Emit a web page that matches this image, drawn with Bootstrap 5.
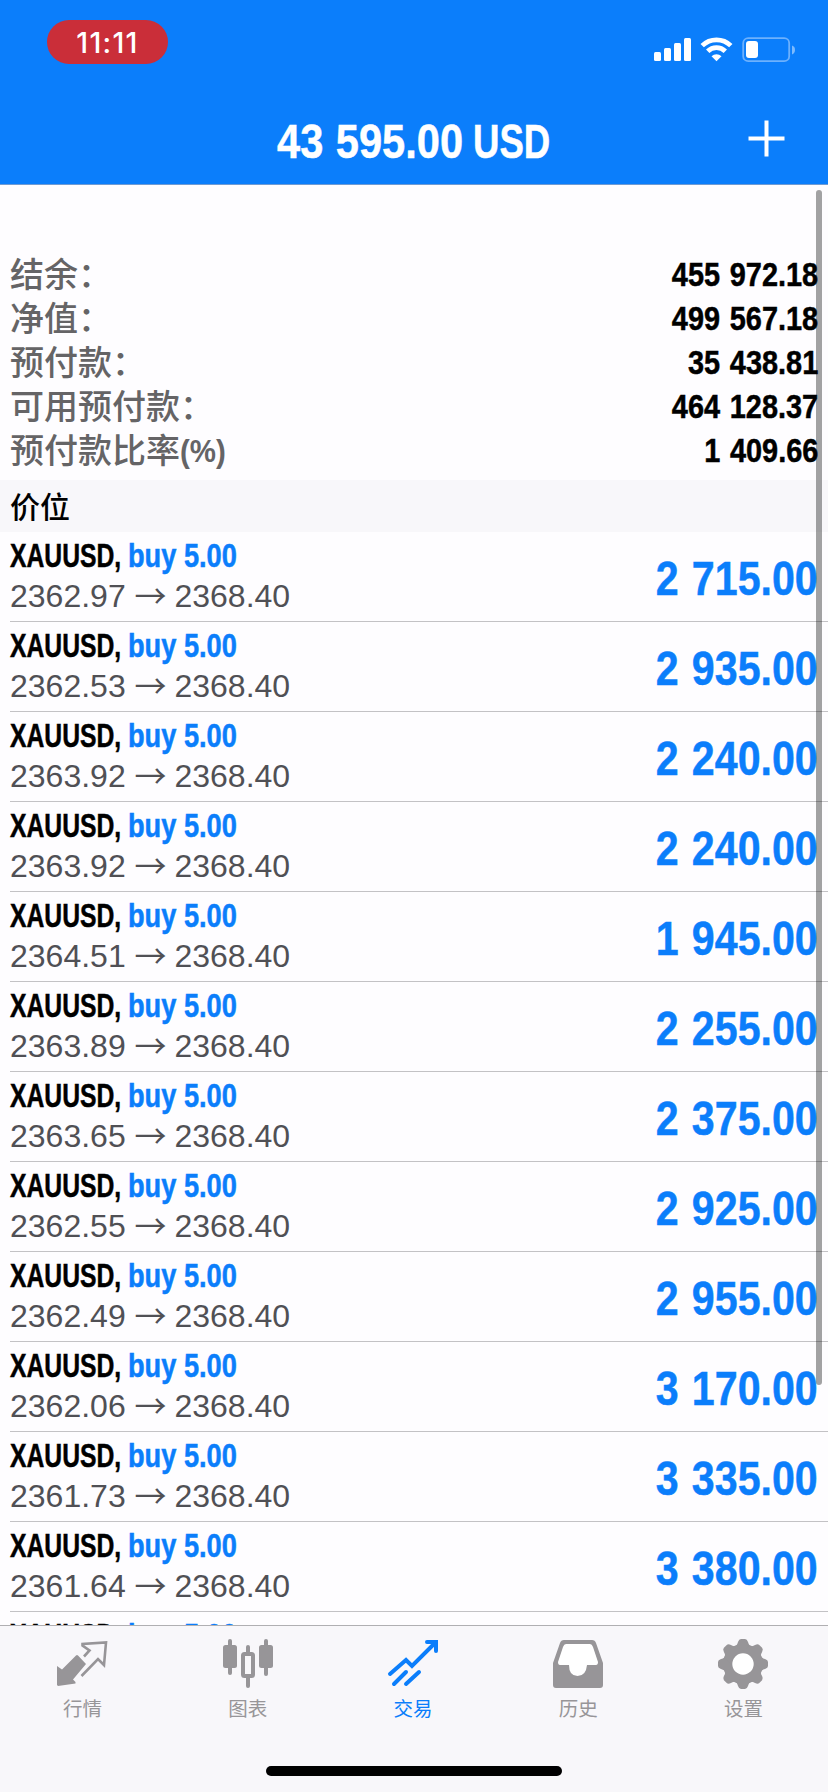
<!DOCTYPE html>
<html lang="zh-CN">
<head>
<meta charset="utf-8">
<meta name="viewport" content="width=device-width, initial-scale=1">
<title>交易</title>
<link href="https://cdn.jsdelivr.net/npm/bootstrap@5.3.0/dist/css/bootstrap.min.css" rel="stylesheet">
<style>
:root { --accent: #0b7efb; }
html, body { height: 100%; overflow: hidden; }
body { background: #fefdff; color: #000; font-family: "Liberation Sans", "Noto Sans CJK SC", sans-serif; }
.app { height: 1792px; width: 828px; }
.topbar { height: 185px; background: var(--accent); border-bottom: 1px solid #6f9bd3; color: #fff; }
.status { height: 86px; padding: 20px 32px 0 47px; }
.clock { width: 121px; height: 44px; border-radius: 22px; background: #ca2e39; font: 500 28.5px/46px Inter, sans-serif; letter-spacing: 1.3px; }
.signals { margin-top: 17px; }
.titlebar { height: 98px; }
/* condensed bold lettering */
.cond { display: inline-block; white-space: nowrap; font-weight: 700; transform: scaleX(.85); transform-origin: left; -webkit-text-stroke: .5px currentColor; }
.cond.end { transform-origin: right; }
.titlebar h1 { font-size: 49px; line-height: 56px; width: 274px; margin: 27px 0 0; }
.titlebar .amount { width: 195.5px; word-spacing: 1px; transform: scaleX(.85); }
.titlebar .ccy { width: 78.5px; transform: scaleX(.747); }
.plus { right: 43px; top: 34px; }
.summary { height: 295px; padding: 67px 10px 0; }
.summary .line { height: 44px; }
.summary dt { font: 500 34px/44px "Noto Sans CJK SC", sans-serif; color: #656466; margin-top: -1px; }
.summary dd { font-size: 34px; line-height: 44px; word-spacing: 2px; }
.pct { font: 700 32px/40px "Liberation Sans", sans-serif; transform: scaleX(.92); transform-origin: left; vertical-align: 1px; }
.section { height: 52px; padding-left: 10px; background: #f8f7fa; font: 500 30px/50px "Noto Sans CJK SC", sans-serif; }
.deals { height: 1093px; }
.deal { height: 90px; margin-left: 10px; padding-right: 10px; border-bottom: 1px solid #c3c2c5; }
.sym { font-size: 32.5px; line-height: 40px; padding-top: 4px; }
.sym .code { width: 118px; transform: scaleX(.76); }
.sym .side { color: var(--accent); transform: scaleX(.837); }
.quote { font-size: 32px; line-height: 40px; color: #505055; }
.arw { font-family: "Noto Sans CJK SC", sans-serif; line-height: 1; vertical-align: -1px; margin-right: -1px; }
.profit { font-size: 49px; line-height: 60px; color: var(--accent); word-spacing: 2px; padding-top: 2px; }
.profit.cond { transform: scaleX(.84); }
.scroll-thumb { left: 816px; top: 190px; width: 6px; height: 1195px; border-radius: 3px; background: rgba(0,0,0,.36); }
.tabs { height: 167px; background: #f8f7fa; border-top: 1px solid #b0afb2; padding-right: 2px; }
.tab { color: #979598; font: 400 19.5px/26px "Noto Sans CJK SC", sans-serif; padding-top: 12px; text-decoration: none; }
.tab span { margin-top: 5px; }
.tab.active { color: var(--accent); }
.home { left: 266px; bottom: 16px; width: 296px; height: 10px; border-radius: 5px; background: #000; }
</style>
</head>
<body>
<div class="app d-flex flex-column position-relative overflow-hidden">
  <header class="topbar flex-shrink-0">
    <div class="status d-flex justify-content-between">
      <div class="clock text-center">11:11</div>
      <svg class="signals" width="142" height="26" viewBox="0 0 142 26" fill="#fff">
        <rect x="0" y="15" width="7" height="9" rx="1.5"/><rect x="10" y="11" width="7" height="13" rx="1.5"/><rect x="20" y="6" width="7" height="18" rx="1.5"/><rect x="30" y="1" width="7" height="23" rx="1.5"/>
        <g fill="none" stroke="#fff" stroke-width="4.8"><path d="M48.2 8.600a20.500 20.500 0 0 1 28.600 0"/><path d="M53.700 14.200a12.600 12.600 0 0 1 17.600 0"/></g>
        <path d="M57.500 19.200a7.400 7.400 0 0 1 10 0l-5 5z"/>
        <rect x="89.200" y="1.200" width="46" height="23" rx="5" fill="none" stroke="#6db1fd" stroke-width="1.800"/>
        <rect x="92" y="4" width="12" height="17" rx="3"/><path d="M138 8.600q3 1 3 4.400t-3 4.400z" fill="#7dbafd"/>
      </svg>
    </div>
    <div class="titlebar position-relative d-flex justify-content-center">
      <h1 class="d-flex"><span class="cond amount">43 595.00</span><span class="cond ccy">USD</span></h1>
      <svg class="plus position-absolute" width="37" height="37" viewBox="0 0 37 37" stroke="#fff" stroke-width="4"><path d="M18.500.5v36M.5 18.500h36"/></svg>
    </div>
  </header>

  <dl class="summary flex-shrink-0 mb-0">
    <div class="line d-flex justify-content-between"><dt>结余：</dt><dd class="cond end mb-0">455 972.18</dd></div>
    <div class="line d-flex justify-content-between"><dt>净值：</dt><dd class="cond end mb-0">499 567.18</dd></div>
    <div class="line d-flex justify-content-between"><dt>预付款：</dt><dd class="cond end mb-0">35 438.81</dd></div>
    <div class="line d-flex justify-content-between"><dt>可用预付款：</dt><dd class="cond end mb-0">464 128.37</dd></div>
    <div class="line d-flex justify-content-between"><dt>预付款比率<span class="pct d-inline-block">(%)</span></dt><dd class="cond end mb-0">1 409.66</dd></div>
  </dl>
  <div class="section flex-shrink-0">价位</div>
  <main class="deals flex-shrink-0 overflow-hidden" id="deals"></main>

  <nav class="tabs flex-shrink-0 d-flex">
    <a class="tab flex-fill w-100 d-flex flex-column align-items-center"><svg width="52" height="52" viewBox="1 0 52 52"><path d="M1 28l5 3.500L20 17.500q1-1 2 0l8 8.500-13 15.500 2.500 2.500v1.500L2 48l-1-1z" fill="currentColor"/><path d="M25.500 38L42 21l6 6L50 4.500 26.500 6v1.500l7 5-5.500 6" fill="none" stroke="currentColor" stroke-width="2.600"/></svg><span>行情</span></a>
    <a class="tab flex-fill w-100 d-flex flex-column align-items-center"><svg width="52" height="52" viewBox="0 0 52 52"><g fill="currentColor"><rect x="1" y="7" width="14" height="23" rx="2.500"/><rect x="6" y="1" width="4" height="36" rx="2"/><rect x="37" y="7" width="14" height="23" rx="2.500"/><rect x="42" y="1" width="4" height="37" rx="2"/><rect x="24" y="7" width="4" height="9" rx="2"/><rect x="24" y="38" width="4" height="12" rx="2"/></g><rect x="21" y="16" width="10" height="22" rx="1.500" fill="none" stroke="currentColor" stroke-width="4"/></svg><span>图表</span></a>
    <a class="tab active flex-fill w-100 d-flex flex-column align-items-center"><svg width="52" height="52" viewBox="0 0 52 52" fill="none" stroke="currentColor" stroke-width="4" stroke-linecap="round"><path d="M3 36L19 22l6 6L48 5M7 46l12-12M19 46l13-12"/><path d="M40 4h9v9" stroke-linejoin="miter"/></svg><span>交易</span></a>
    <a class="tab flex-fill w-100 d-flex flex-column align-items-center"><svg width="52" height="52" viewBox="0 0 52 52"><path fill="currentColor" d="M12 2h28q3 0 4 3l7 20v22q0 3-3 3H4q-3 0-3-3V25L8 5q1-3 4-3z"/><path fill="#fff" d="M14 6q-2 0-3 3L6 24q0 3 2 3h9q0 11 8.500 11T35 27h9q2 0 2-3L41 9q-1-3-3-3z"/></svg><span>历史</span></a>
    <a class="tab flex-fill w-100 d-flex flex-column align-items-center"><svg width="52" height="52" viewBox="-26 -26 52 52"><g fill="currentColor"><circle r="20"/><g id="teeth"><path id="t" d="M-9-17q3-1 4-5 1-3 3-3h4q2 0 3 3 1 4 4 5V0H-9z"/><use href="#t" transform="rotate(45)"/><use href="#t" transform="rotate(90)"/><use href="#t" transform="rotate(135)"/></g><use href="#teeth" transform="rotate(180)"/></g><circle r="10.700" fill="#fff"/></svg><span>设置</span></a>
  </nav>
  <div class="scroll-thumb position-absolute"></div>
  <div class="home position-absolute"></div>
</div>
<script>
const deals = [["2362.97","2 715.00"],["2362.53","2 935.00"],["2363.92","2 240.00"],["2363.92","2 240.00"],["2364.51","1 945.00"],["2363.89","2 255.00"],["2363.65","2 375.00"],["2362.55","2 925.00"],["2362.49","2 955.00"],["2362.06","3 170.00"],["2361.73","3 335.00"],["2361.64","3 380.00"],["",""]];
document.getElementById("deals").innerHTML = deals.map(([open, profit]) => `
  <div class="deal d-flex justify-content-between align-items-center">
    <div class="align-self-start"><div class="sym d-flex"><span class="cond code">XAUUSD,</span><span class="cond side">buy 5.00</span></div>${open && `<div class="quote">${open} <span class="arw">→</span> 2368.40</div>`}</div>
    <div class="profit cond end">${profit}</div>
  </div>`).join("");
</script>
<script src="https://cdn.jsdelivr.net/npm/bootstrap@5.3.0/dist/js/bootstrap.bundle.min.js"></script>
</body>
</html>
